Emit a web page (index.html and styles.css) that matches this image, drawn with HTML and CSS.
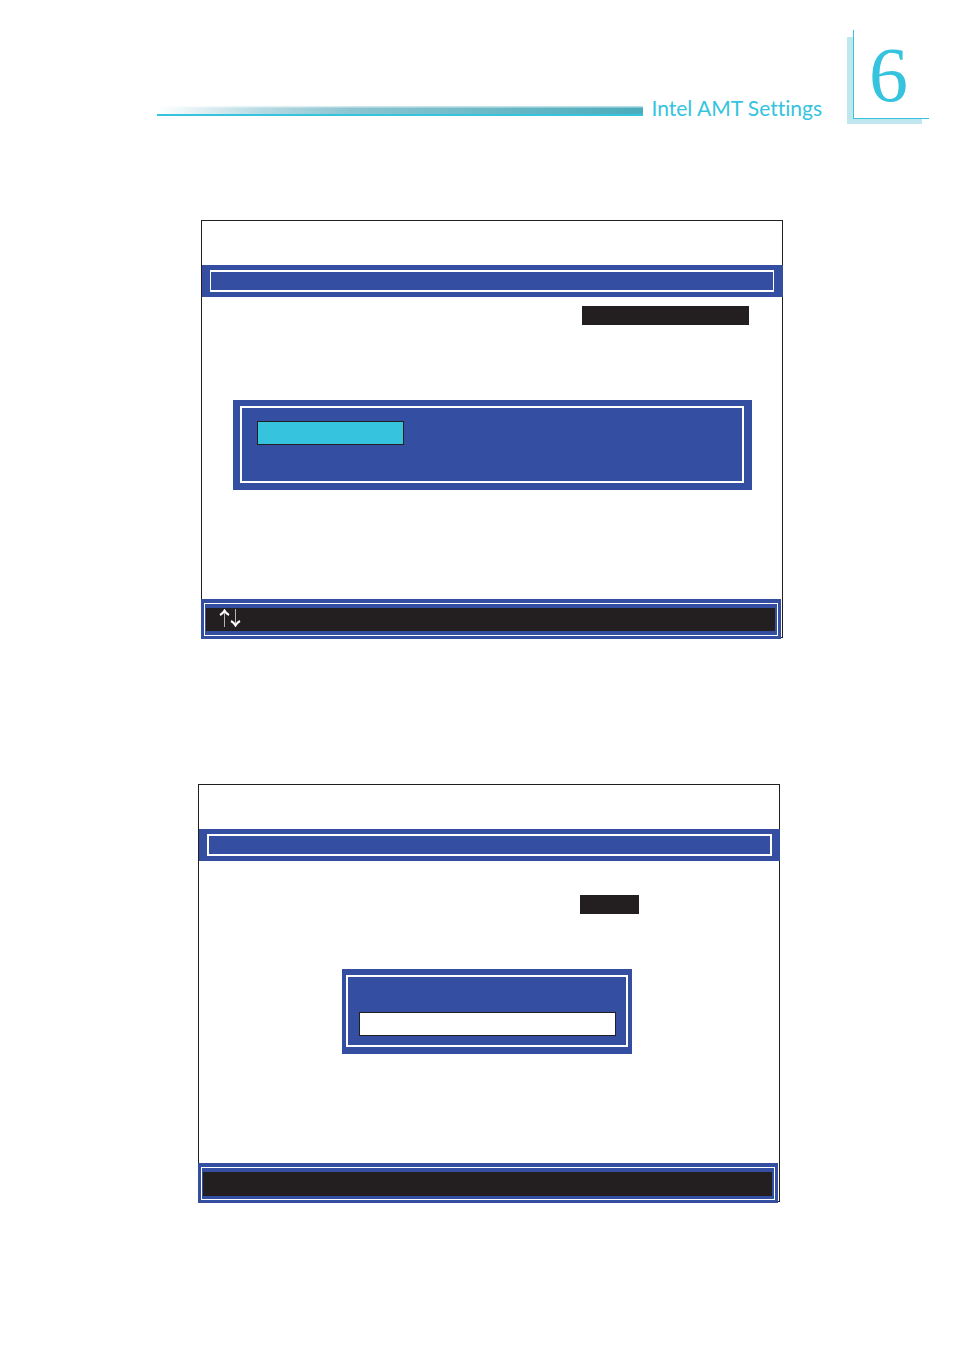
FILE: index.html
```html
<!DOCTYPE html>
<html lang="en">
<head>
    <meta charset="UTF-8">
    <meta name="viewport" content="width=device-width, initial-scale=1.0">
    <title>Intel AMT Settings</title>
    <link rel="stylesheet" href="styles.css">
</head>
<body>
    <header class="page-header">
        <div class="header-rule"></div>
        <h1>Intel AMT Settings</h1>
        <div class="chapter">6</div>
    </header>
    <main>
        <section class="screen">
            <div class="title-bar">
                <div class="title-frame"></div>
            </div>
            <div class="screen-body">
                <div class="tag"></div>
                <div class="popup">
                    <div class="popup-frame">
                        <button class="option" type="button" aria-label="Selected option"></button>
                    </div>
                </div>
            </div>
            <div class="key-bar">
                <div class="key-frame">
                    <div class="keys">
                        <svg class="arrows" width="22" height="18" viewBox="0 0 22 18" role="img" aria-label="Up and down arrows">
                            <path class="stem" d="M5.5 2V18M16.500 0V16"/>
                            <path class="head" d="M1 6C3 5 4.500 3.500 5.500 1.500C6.500 3.500 8 5 10 6M12 12C14 13 15.500 14.500 16.500 16.500C17.500 14.500 19 13 21 12"/>
                        </svg>
                    </div>
                </div>
            </div>
        </section>
        <section class="screen screen-password">
            <div class="title-bar">
                <div class="title-frame"></div>
            </div>
            <div class="screen-body">
                <div class="tag"></div>
                <div class="popup">
                    <div class="popup-frame">
                        <input class="password" type="password" aria-label="Password">
                    </div>
                </div>
            </div>
            <div class="key-bar">
                <div class="key-frame">
                    <div class="keys"></div>
                </div>
            </div>
        </section>
    </main>
</body>
</html>
```
FILE: styles.css
```css
* {
    box-sizing: border-box;
}
body {
    margin: 0;
    background-color: white;
    font-family: Lato, "Liberation Sans", sans-serif;
}

/* Page header */
.page-header {
    display: flex;
    align-items: flex-end;
    padding: 30px 25px 0 157px;
    color: #35c3de;
    isolation: isolate;
}
.header-rule {
    flex: 1;
    height: 10px;
    margin-bottom: 3px;
    border-bottom: 2px solid #35c3de;
    background: linear-gradient(to bottom, rgba(255, 255, 255, 0.6) 1px, transparent 2px),
        linear-gradient(to right, white, #b5d9e2 22%, #8cc5d1 40%, #4aacbc);
}
.page-header h1 {
    margin: 0 31px 0 8px;
    font-size: 21px;
    line-height: 22px;
    font-weight: 400;
    font-variant-ligatures: none;
}
.chapter {
    position: relative;
    width: 76px;
    height: 89px;
    border-left: 1px solid #35c3de;
    border-bottom: 1px solid #35c3de;
    background-color: white;
    font-family: "Liberation Serif", serif;
    font-size: 78px;
    line-height: 90px;
    padding-left: 15px;
}
/* pale slab behind the chapter number */
.chapter::before {
    content: "";
    position: absolute;
    z-index: -1;
    top: 7px;
    right: 7px;
    bottom: -6px;
    left: -7px;
    background-color: #c0e6ee;
}

/* BIOS screens */
.screen {
    display: flex;
    flex-direction: column;
    height: 418px;
    margin: 101px 171px 0 201px;
    padding-top: 44px;
    border: 1px solid #231f20;
}
.title-bar {
    height: 32px;
    margin-right: -1px;
    padding: 5px 9px 5px 8px;
    background-color: #344fa2;
}
.title-frame {
    height: 22px;
    border: 2px solid white;
    border-width: 2px 1px;
}
.screen-body {
    flex: 1;
    padding: 9px 30px 0 31px;
}
.tag {
    width: 167px;
    height: 19px;
    margin: 0 3px 0 auto;
    background-color: #231f20;
}
.popup {
    height: 90px;
    margin-top: 75px;
    padding: 6px 8px 7px 7px;
    background-color: #344fa2;
}
.popup-frame {
    height: 100%;
    padding: 13px 15px;
    border: 2px solid white;
}
.option {
    display: block;
    width: 147px;
    height: 24px;
    padding: 0;
    border: 1px solid #231f20;
    background-color: #35c3de;
}
.key-bar {
    height: 40px;
    margin: 0 1px -2px -1px;
    padding: 4px 3px 3px;
    background-color: #344fa2;
}
.key-frame {
    height: 33px;
    padding: 4px 2px 4px 1px;
    border: 1px solid white;
}
.keys {
    height: 23px;
    padding: 1px 13px;
    background-color: #231f20;
}
.arrows {
    display: block;
    fill: none;
}
.arrows .stem {
    stroke: #b5b3b4;
}
.arrows .head {
    stroke: white;
    stroke-width: 2;
}

/* Password prompt */
.screen-password {
    margin: 146px 174px 148px 198px;
}
.screen-password .title-bar {
    padding-right: 8px;
}
.screen-password .title-frame {
    border-width: 2px;
}
.screen-password .screen-body {
    padding: 34px 147px 0 143px;
}
.screen-password .tag {
    width: 59px;
    margin-right: -7px;
}
.screen-password .popup {
    height: 85px;
    margin-top: 55px;
    padding: 6px 4px 7px;
}
.screen-password .popup-frame {
    padding: 35px 10px 0 11px;
}
.screen-password .keys {
    height: 24px;
}
.password {
    display: block;
    width: 100%;
    height: 24px;
    padding: 0 8px;
    border: 1px solid #231f20;
    border-radius: 0;
    background-color: white;
}
```
